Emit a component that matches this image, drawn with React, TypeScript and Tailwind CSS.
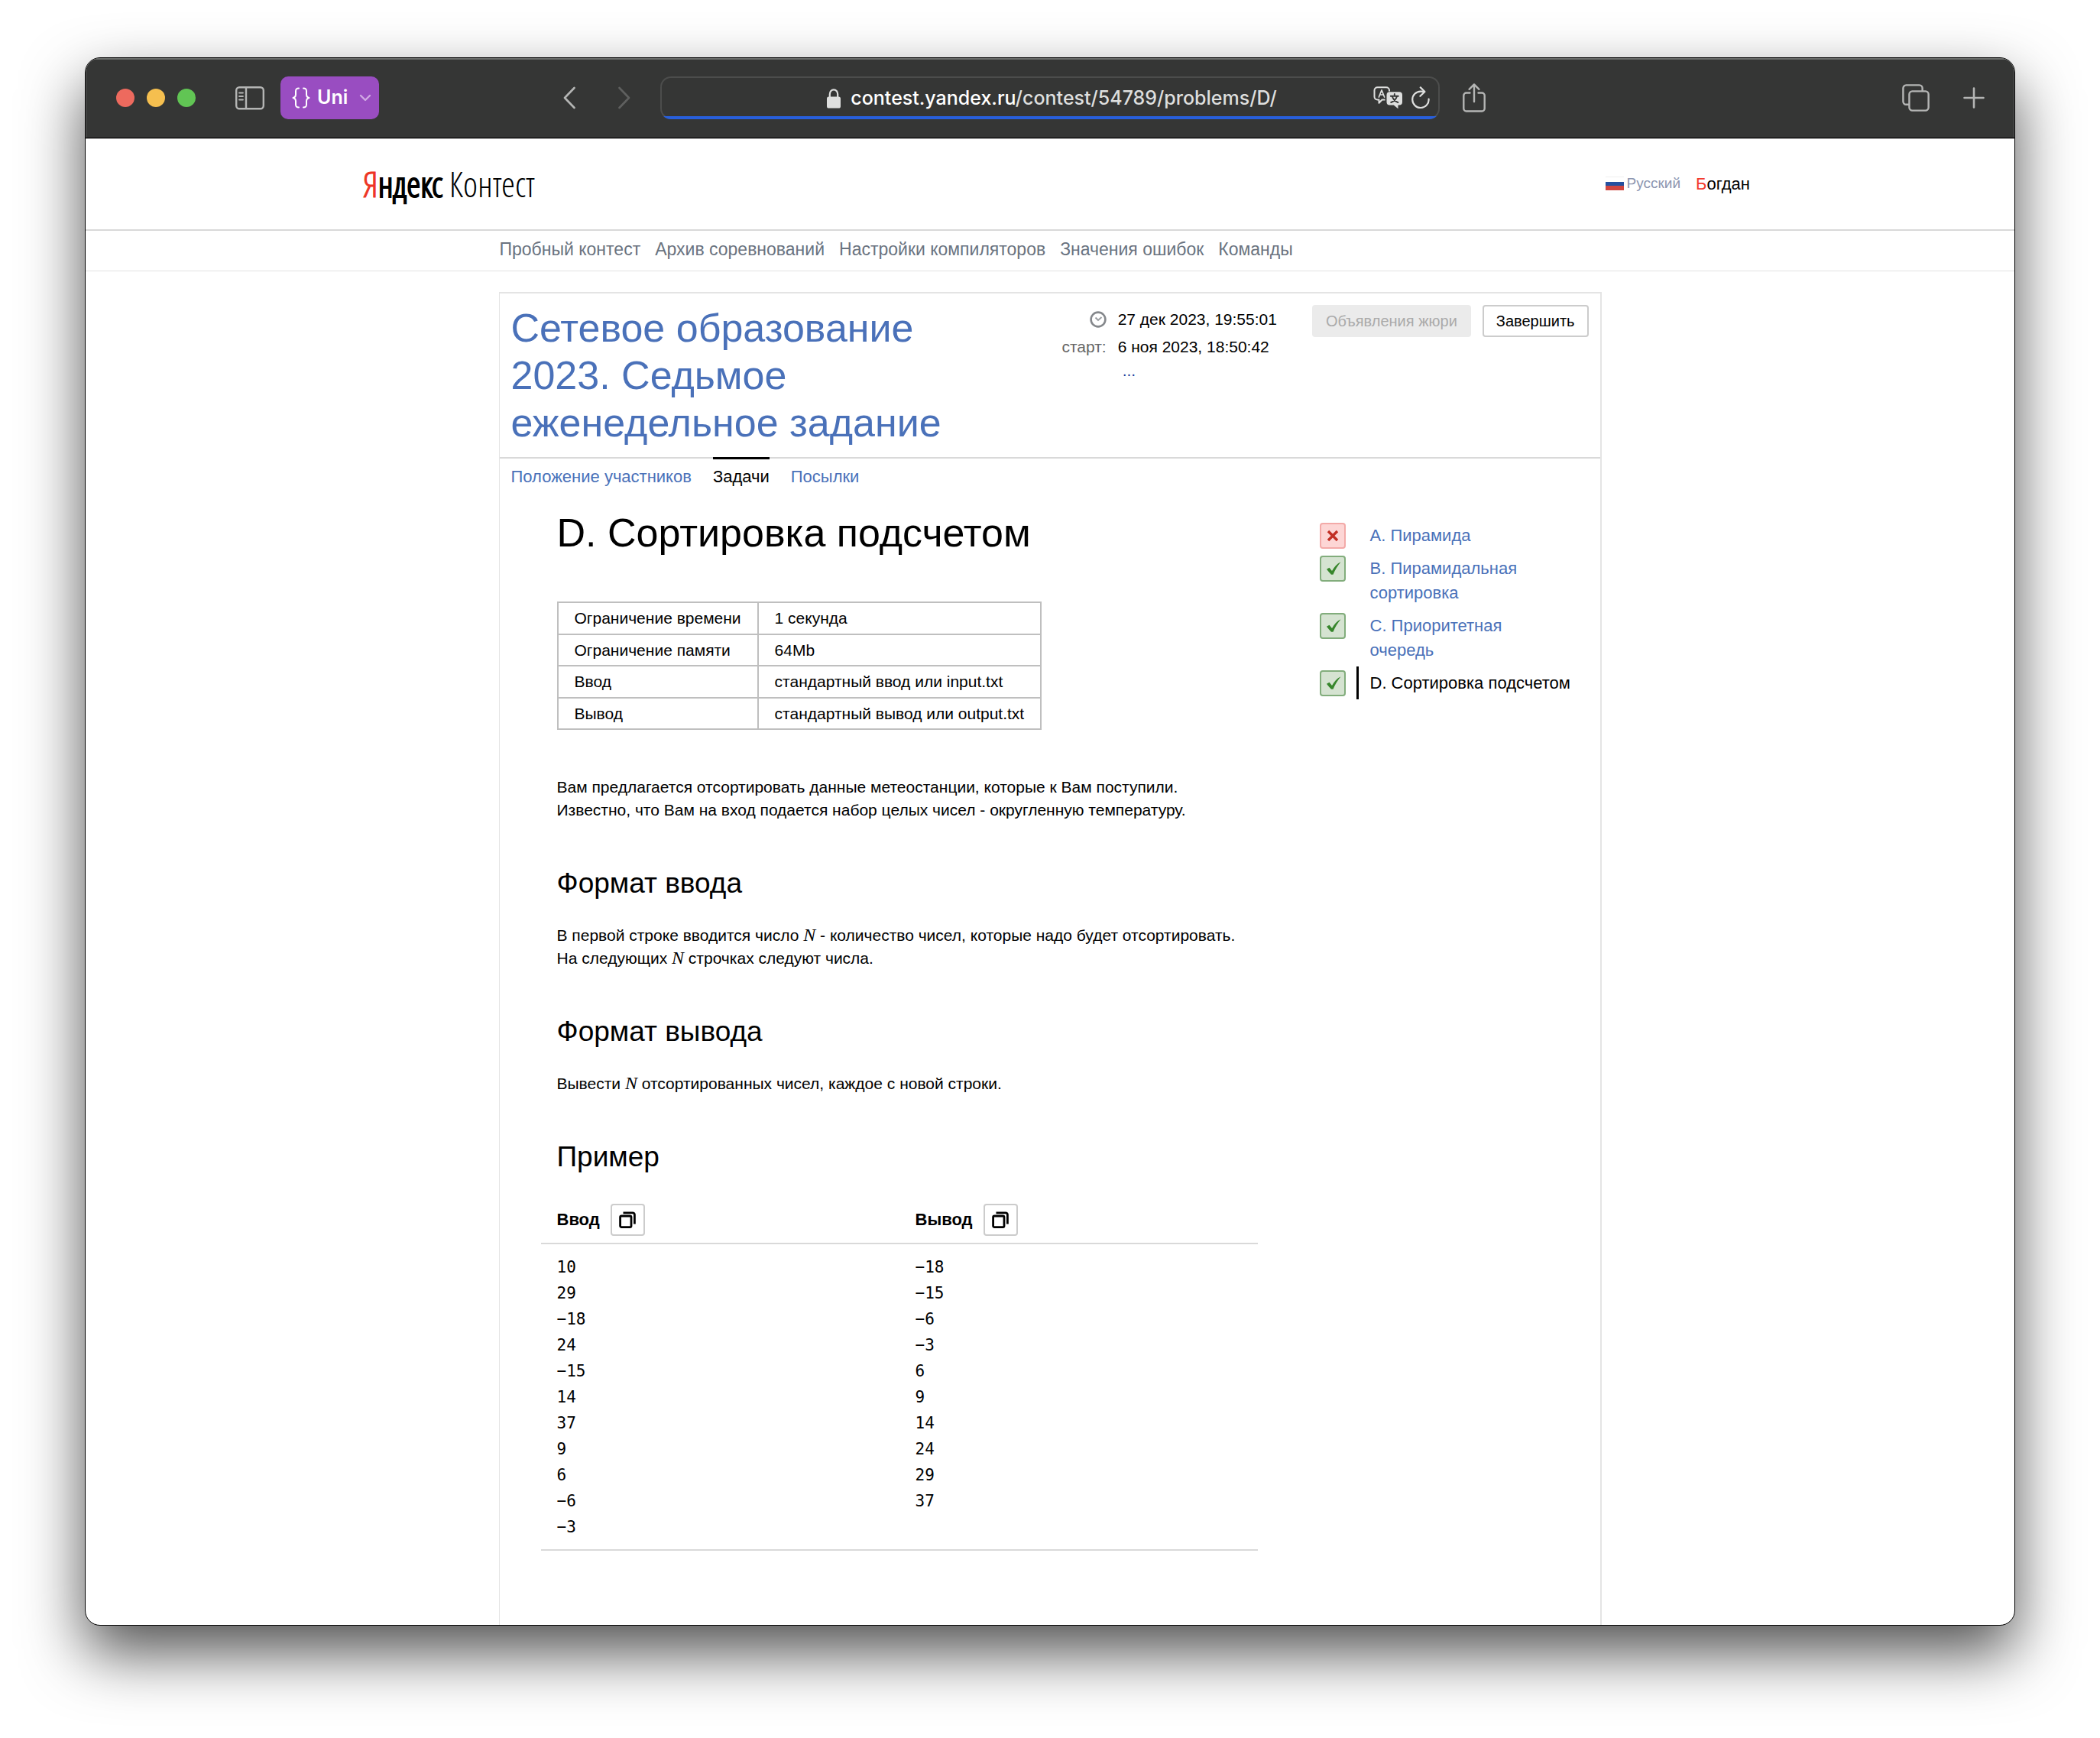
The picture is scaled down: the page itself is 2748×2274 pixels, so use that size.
import type { ReactNode } from "react";

const navLinks = ["Пробный контест", "Архив соревнований", "Настройки компиляторов", "Значения ошибок", "Команды"];

const limits = [
  ["Ограничение времени", "1 секунда"],
  ["Ограничение памяти", "64Mb"],
  ["Ввод", "стандартный ввод или input.txt"],
  ["Вывод", "стандартный вывод или output.txt"],
];

const problems = [
  { title: "A. Пирамида", solved: false },
  { title: "B. Пирамидальная сортировка", solved: true },
  { title: "C. Приоритетная очередь", solved: true },
  { title: "D. Сортировка подсчетом", solved: true, active: true },
];

const sampleInput = ["10", "29", "−18", "24", "−15", "14", "37", "9", "6", "−6", "−3"];
const sampleOutput = ["−18", "−15", "−6", "−3", "6", "9", "14", "24", "29", "37"];

function SidebarIcon() {
  return (
    <svg className="h-[32px] w-[38px]" viewBox="0 0 38 32" fill="none" stroke="#b4b5b4" strokeWidth="2.4">
      <rect x="1.2" y="2.2" width="35.6" height="28" rx="4" />
      <path d="M14 2.2V30.2" />
      <path d="M5 9.5h5M5 14h5M5 18.5h5" strokeWidth="1.8" strokeLinecap="round" />
    </svg>
  );
}

function LockIcon() {
  return (
    <svg className="h-[26px] w-[18px]" viewBox="0 0 18 26">
      <rect x="0" y="10.5" width="18" height="15" rx="2.6" fill="#dedfde" />
      <path d="M3.8 12V7.2a5.2 5.8 0 0 1 10.4 0V12" fill="none" stroke="#dedfde" strokeWidth="2.2" />
    </svg>
  );
}

function TranslateIcon() {
  return (
    <svg className="h-[30px] w-[40px]" viewBox="0 0 40 30" fill="none">
      <path
        d="M15.500 17.500H11.500L7.500 21.800V17.500H5.500a4 4 0 0 1-4-4V5.200a4 4 0 0 1 4-4H17a4 4 0 0 1 4 4V6.500"
        stroke="#dedfde"
        strokeWidth="2"
        strokeLinejoin="round"
      />
      <path d="M7.400 14L11 4.800L14.600 14M8.600 11h4.800" stroke="#dedfde" strokeWidth="1.700" strokeLinecap="round" strokeLinejoin="round" />
      <path d="M21.500 7.200H34a4 4 0 0 1 4 4V20.500a4 4 0 0 1-4 4h-1.500V29.200L26.800 24.500H21.500a4 4 0 0 1-4-4V11.200a4 4 0 0 1 4-4Z" fill="#dedfde" />
      <path d="M27.800 10v2.600M22.800 12.800h10M31 13c-1.200 4-4 6.600-7.800 8M24.800 13c1.200 4 3.600 6.600 7.600 8" stroke="#353635" strokeWidth="1.900" strokeLinecap="round" />
    </svg>
  );
}

function ReloadIcon() {
  return (
    <svg className="h-[30px] w-[24px]" viewBox="0 0 24 30" fill="none" stroke="#dedfde" strokeWidth="2.200" strokeLinecap="round" strokeLinejoin="round">
      <path d="M22.600 16.500A10.700 10.700 0 1 1 12 6.600L17 6.800" />
      <path d="M11.800 1.400L17.400 7L11.400 12.800" />
    </svg>
  );
}

function ShareIcon() {
  return (
    <svg className="h-[40px] w-[30px]" viewBox="0 0 30 40" fill="none" stroke="#b4b5b4" strokeWidth="2.400" strokeLinecap="round" strokeLinejoin="round">
      <path d="M9.500 13.500H4.800a3.500 3.500 0 0 0-3.500 3.500V34a3.500 3.500 0 0 0 3.500 3.500H25.200a3.500 3.500 0 0 0 3.500-3.500V17a3.500 3.500 0 0 0-3.500-3.500H20.500" />
      <path d="M15 25V3M8.600 8.800L15 2.400L21.400 8.800" />
    </svg>
  );
}

function TabsIcon() {
  return (
    <svg className="h-[36px] w-[36px]" viewBox="0 0 36 36" fill="none" stroke="#b4b5b4" strokeWidth="2.400">
      <rect x="9.400" y="9.400" width="25.200" height="25.200" rx="4" />
      <path d="M9.400 26.800H5.400a4 4 0 0 1-4-4V5.400a4 4 0 0 1 4-4H22.600a4 4 0 0 1 4 4V9.400" />
    </svg>
  );
}

function CopyButton({ label }: { label: string }) {
  return (
    <button aria-label={label} className="flex h-[42px] w-[45px] items-center justify-center rounded-[4px] border-2 border-[#cccccc] bg-white">
      <svg className="h-[22px] w-[22px]" viewBox="0 0 22 22" fill="none" stroke="#000" strokeWidth="2.800">
        <rect x="1.600" y="6" width="14.400" height="14.600" rx="1.600" />
        <path d="M5.500 1.800H18a2.400 2.400 0 0 1 2.400 2.400V16.500" />
      </svg>
    </button>
  );
}

function Verdict({ solved }: { solved: boolean }) {
  return solved ? (
    <span role="img" aria-label="Решена" className="flex h-[34px] w-[34px] items-center justify-center rounded-[4px] border-2 border-[#82ad7c] bg-[#d5e3d1]">
      <svg className="h-[30px] w-[30px]" viewBox="0 0 30 30">
        <path d="M7 15.800L10.500 13.800L14 18C17 13 20.500 8.600 25.500 6.300C21.500 11 18 16.500 15.500 22.800H13C11 20.800 9 18.500 7 15.800Z" fill="#37862c" />
      </svg>
    </span>
  ) : (
    <span role="img" aria-label="Не решена" className="flex h-[34px] w-[34px] items-center justify-center rounded-[4px] border-2 border-[#f3aaa8] bg-[#fdd6d5]">
      <svg className="h-[16px] w-[16px]" viewBox="0 0 16 16" stroke="#c22f24" strokeWidth="3.400">
        <path d="M2 2L14 14M14 2L2 14" />
      </svg>
    </span>
  );
}

function Heading({ children }: { children: ReactNode }) {
  return <h2 className="mt-[58px] text-[37px] leading-[46px]">{children}</h2>;
}

function Var() {
  return <i className="font-['Liberation_Serif',serif] text-[24px] leading-none">N</i>;
}

function Toolbar() {
  return (
    <div className="grid h-[105px] grid-cols-[1fr_1020px_1fr] items-center border-b border-black bg-[#353635] shadow-[inset_0_2px_0_#6b6d6b,inset_1px_0_0_#5b5c5b,inset_-1px_0_0_#5b5c5b] font-[Inter,sans-serif]">
      <div className="flex items-center pr-[39px] pl-[40px]">
        <div className="flex gap-4">
          <button aria-label="Закрыть" className="size-6 rounded-full bg-[#ed6a5e]" />
          <button aria-label="Свернуть" className="size-6 rounded-full bg-[#f5bf4f]" />
          <button aria-label="Развернуть" className="size-6 rounded-full bg-[#61c554]" />
        </div>
        <button aria-label="Боковая панель" className="ml-[52px]">
          <SidebarIcon />
        </button>
        <button className="ml-[21px] flex h-[56px] w-[129px] items-center rounded-[10px] bg-[#994dc1] pl-[15px] text-[25px] font-semibold text-white">
          <svg className="h-[28px] w-[24px]" viewBox="0 0 24 28" fill="none" stroke="#fff" strokeWidth="2" strokeLinecap="round" strokeLinejoin="round">
            <path d="M9 1.500C5.500 1.500 5 3 5 5.500V9.500C5 12 4 13.500 1.500 14C4 14.500 5 16 5 18.500V22.500C5 25 5.500 26.500 9 26.500" />
            <path d="M15 1.500C18.500 1.500 19 3 19 5.500V9.500C19 12 20 13.500 22.500 14C20 14.500 19 16 19 18.500V22.500C19 25 18.500 26.500 15 26.500" />
          </svg>
          <span className="ml-[9px]">Uni</span>
          <svg className="ml-auto mr-[10px] h-[10px] w-[16px]" viewBox="0 0 16 10" fill="none" stroke="#d0a9e4" strokeWidth="2.400" strokeLinecap="round" strokeLinejoin="round">
            <path d="M2 2L8 8L14 2" />
          </svg>
        </button>
        <div className="ml-auto flex gap-14">
          <button aria-label="Назад">
            <svg className="h-[30px] w-[16px]" viewBox="0 0 16 30" fill="none" stroke="#b4b5b4" strokeWidth="2.600" strokeLinecap="round" strokeLinejoin="round">
              <path d="M14.500 2L2 15L14.500 28" />
            </svg>
          </button>
          <button aria-label="Вперёд">
            <svg className="h-[30px] w-[16px]" viewBox="0 0 16 30" fill="none" stroke="#5f605f" strokeWidth="2.600" strokeLinecap="round" strokeLinejoin="round">
              <path d="M1.500 2L14 15L1.500 28" />
            </svg>
          </button>
        </div>
      </div>
      <div className="relative flex h-[56px] items-center overflow-hidden rounded-[14px] pr-[13px] shadow-[inset_0_0_0_2px_#4c4d4c]">
        <div className="flex flex-1 items-center justify-center gap-[13px] pt-[2px] pl-[92px]">
          <LockIcon />
          <span className="text-[25px] font-medium text-[#dedfde]">
            <span className="text-white">contest.yandex.ru</span>/contest/54789/problems/D/
          </span>
        </div>
        <button aria-label="Перевести">
          <TranslateIcon />
        </button>
        <button aria-label="Обновить" className="ml-[10px]">
          <ReloadIcon />
        </button>
        <div className="absolute inset-x-0 bottom-0 h-1 bg-[#285fdb]" />
      </div>
      <div className="flex items-center pr-[39px] pl-[30px]">
        <button aria-label="Поделиться">
          <ShareIcon />
        </button>
        <button aria-label="Вкладки" className="ml-auto">
          <TabsIcon />
        </button>
        <button aria-label="Новая вкладка" className="ml-[44px]">
          <svg className="h-[28px] w-[28px]" viewBox="0 0 28 28" stroke="#b4b5b4" strokeWidth="2.600" strokeLinecap="round">
            <path d="M14 1.500V26.500M1.500 14H26.500" />
          </svg>
        </button>
      </div>
    </div>
  );
}

function SiteHeader() {
  return (
    <>
      <header className="flex h-[121px] items-center justify-between border-t border-b-2 border-t-[#bbbbbb] border-b-[#d9d9d9] pr-[346px] pb-[2px] pl-[363px]">
        <a href="#" className="font-['Open_Sans_Condensed_Light','Open_Sans_Condensed',sans-serif] text-[46px] leading-none font-light">
          <span className="text-[#ee3524] [-webkit-text-stroke:1px]">Я</span>
          <span className="[-webkit-text-stroke:2px]">ндекс</span> Контест
        </a>
        <div className="flex items-center">
          <a href="#" className="flex items-center gap-1 text-[19px] text-[#8d96b0]">
            <span className="flex h-[18px] w-[24px] flex-col border-t border-[#eeeeee]">
              <span className="flex-1 bg-white" />
              <span className="flex-1 bg-[#2450a0]" />
              <span className="flex-1 bg-[#d04640]" />
            </span>
            Русский
          </a>
          <a href="#" className="ml-5 text-[22px]">
            <span className="text-[#f33b2c]">Б</span>огдан
          </a>
        </div>
      </header>
      <nav className="border-b border-[#e2e2e2]">
        <div className="mx-auto flex h-[52px] w-[1443px] max-w-full items-center gap-[19px] pb-1 pl-px text-[23px] text-[#6a7380]">
          {navLinks.map((link) => (
            <a key={link} href="#">
              {link}
            </a>
          ))}
        </div>
      </nav>
    </>
  );
}

function ContestHeader() {
  return (
    <div className="flex items-start border-b-2 border-[#d9d9d9] px-[15px] pt-[14px] pb-[14px]">
      <div className="flex-1">
        <h1 className="max-w-[640px] text-[52px] leading-[62px] text-[#4a71b9]">
          <a href="#">Сетевое образование 2023. Седьмое еженедельное задание</a>
        </h1>
      </div>
      <dl className="mt-[2px] mr-[46px] grid grid-cols-[auto_auto] gap-x-[15px] text-[21px] leading-[36px]">
        <dt className="flex items-center justify-end">
          <svg aria-label="Сейчас" className="h-[22px] w-[22px]" viewBox="0 0 22 22" fill="none">
            <circle cx="11" cy="11" r="9.400" stroke="#85888c" strokeWidth="2.600" />
            <path d="M7.500 8.500L11 12L15.500 8" stroke="#9a9da1" strokeWidth="2" />
          </svg>
        </dt>
        <dd>27 дек 2023, 19:55:01</dd>
        <dt className="text-right text-[#666666]">старт:</dt>
        <dd>6 ноя 2023, 18:50:42</dd>
        <dd className="col-start-2 pl-[6px] leading-[26px]">
          <button className="text-[#1f3f9e]">...</button>
        </dd>
      </dl>
      <div className="mt-px flex gap-[15px] text-[20px]">
        <button disabled className="h-[42px] rounded-[4px] bg-[#ebebeb] px-[18px] text-[#aaaaaa]">
          Объявления жюри
        </button>
        <button className="h-[42px] rounded-[4px] border-2 border-[#cccccc] bg-white px-[16px]">Завершить</button>
      </div>
    </div>
  );
}

function Problem() {
  return (
    <article className="w-[938px] pl-[21px] text-[21px] leading-[30px]">
      <h1 className="text-[52px] leading-[62px]">D. Сортировка подсчетом</h1>
      <table className="mt-[59px] border-collapse text-[21px] leading-[24px]">
        <tbody>
          {limits.map(([name, value]) => (
            <tr key={name} className="odd:h-[42px] even:h-[41px]">
              <td className="border-2 border-[#bfbfbf] px-[21px]">{name}</td>
              <td className="border-2 border-[#bfbfbf] px-[21px]">{value}</td>
            </tr>
          ))}
        </tbody>
      </table>
      <p className="mt-[60px]">
        Вам предлагается отсортировать данные метеостанции, которые к Вам поступили.
        <br />
        Известно, что Вам на вход подается набор целых чисел - округленную температуру.
      </p>
      <Heading>Формат ввода</Heading>
      <p className="mt-[30px]">
        В первой строке вводится число <Var /> - количество чисел, которые надо будет отсортировать.
        <br />
        На следующих <Var /> строчках следуют числа.
      </p>
      <Heading>Формат вывода</Heading>
      <p className="mt-[30px]">
        Вывести <Var /> отсортированных чисел, каждое с новой строки.
      </p>
      <Heading>Пример</Heading>
      <table className="mt-[38px] -ml-[21px] w-[938px] table-fixed border-collapse text-left">
        <thead>
          <tr className="border-b-2 border-[#d9d9d9]">
            <th className="pb-[9px] pl-[21px] text-[22px]">
              <div className="flex items-center gap-[14px]">
                Ввод
                <CopyButton label="Скопировать ввод" />
              </div>
            </th>
            <th className="pb-[9px] pl-[21px] text-[22px]">
              <div className="flex items-center gap-[14px]">
                Вывод
                <CopyButton label="Скопировать вывод" />
              </div>
            </th>
          </tr>
        </thead>
        <tbody>
          <tr className="border-b-2 border-[#d9d9d9] align-top">
            {[sampleInput, sampleOutput].map((lines, i) => (
              <td key={i} className="pt-[13px] pb-3 pl-[21px]">
                <pre className="font-['DejaVu_Sans_Mono',monospace] text-[21px] leading-[34px]">{lines.join("\n")}</pre>
              </td>
            ))}
          </tr>
        </tbody>
      </table>
    </article>
  );
}

export default function App() {
  return (
    <div className="flex min-h-screen flex-col bg-white px-[111px] pt-[75px] pb-[147px] font-['Liberation_Sans',Arial,sans-serif] text-black">
      <div className="flex flex-1 flex-col overflow-hidden rounded-[20px] border border-black bg-white shadow-[0_36px_80px_rgba(0,0,0,0.68)]">
        <Toolbar />
        <SiteHeader />
        <main className="mx-auto mt-[27px] flex w-[1443px] max-w-full flex-1 flex-col border-t-2 border-r-2 border-l border-[#e4e4e4]">
          <ContestHeader />
          <nav className="-mt-[2px] flex gap-7 px-[15px] text-[22px] leading-[26px] text-[#4a71b9]">
            <a href="#" className="pt-[13px]">
              Положение участников
            </a>
            <a href="#" aria-current="page" className="border-t-[3px] border-black pt-[10px] text-black">
              Задачи
            </a>
            <a href="#" className="pt-[13px]">
              Посылки
            </a>
          </nav>
          <div className="mt-[29px] flex justify-between pl-[54px]">
            <Problem />
            <ul className="mt-[13px] w-[367px] pr-8 text-[22px] leading-[32px]">
              {problems.map((p) => (
                <li key={p.title} className="flex gap-[14px]">
                  <div className="pt-[5px]">
                    <Verdict solved={p.solved} />
                  </div>
                  <a
                    href="#"
                    className={
                      p.active
                        ? "flex-1 border-l-[3px] border-black pt-[6px] pb-[5px] pl-[15px] text-black"
                        : "flex-1 border-l-[3px] border-transparent pt-[6px] pr-6 pb-[5px] pl-[15px] text-[#4a71b9]"
                    }
                  >
                    {p.title}
                  </a>
                </li>
              ))}
            </ul>
          </div>
        </main>
      </div>
    </div>
  );
}
